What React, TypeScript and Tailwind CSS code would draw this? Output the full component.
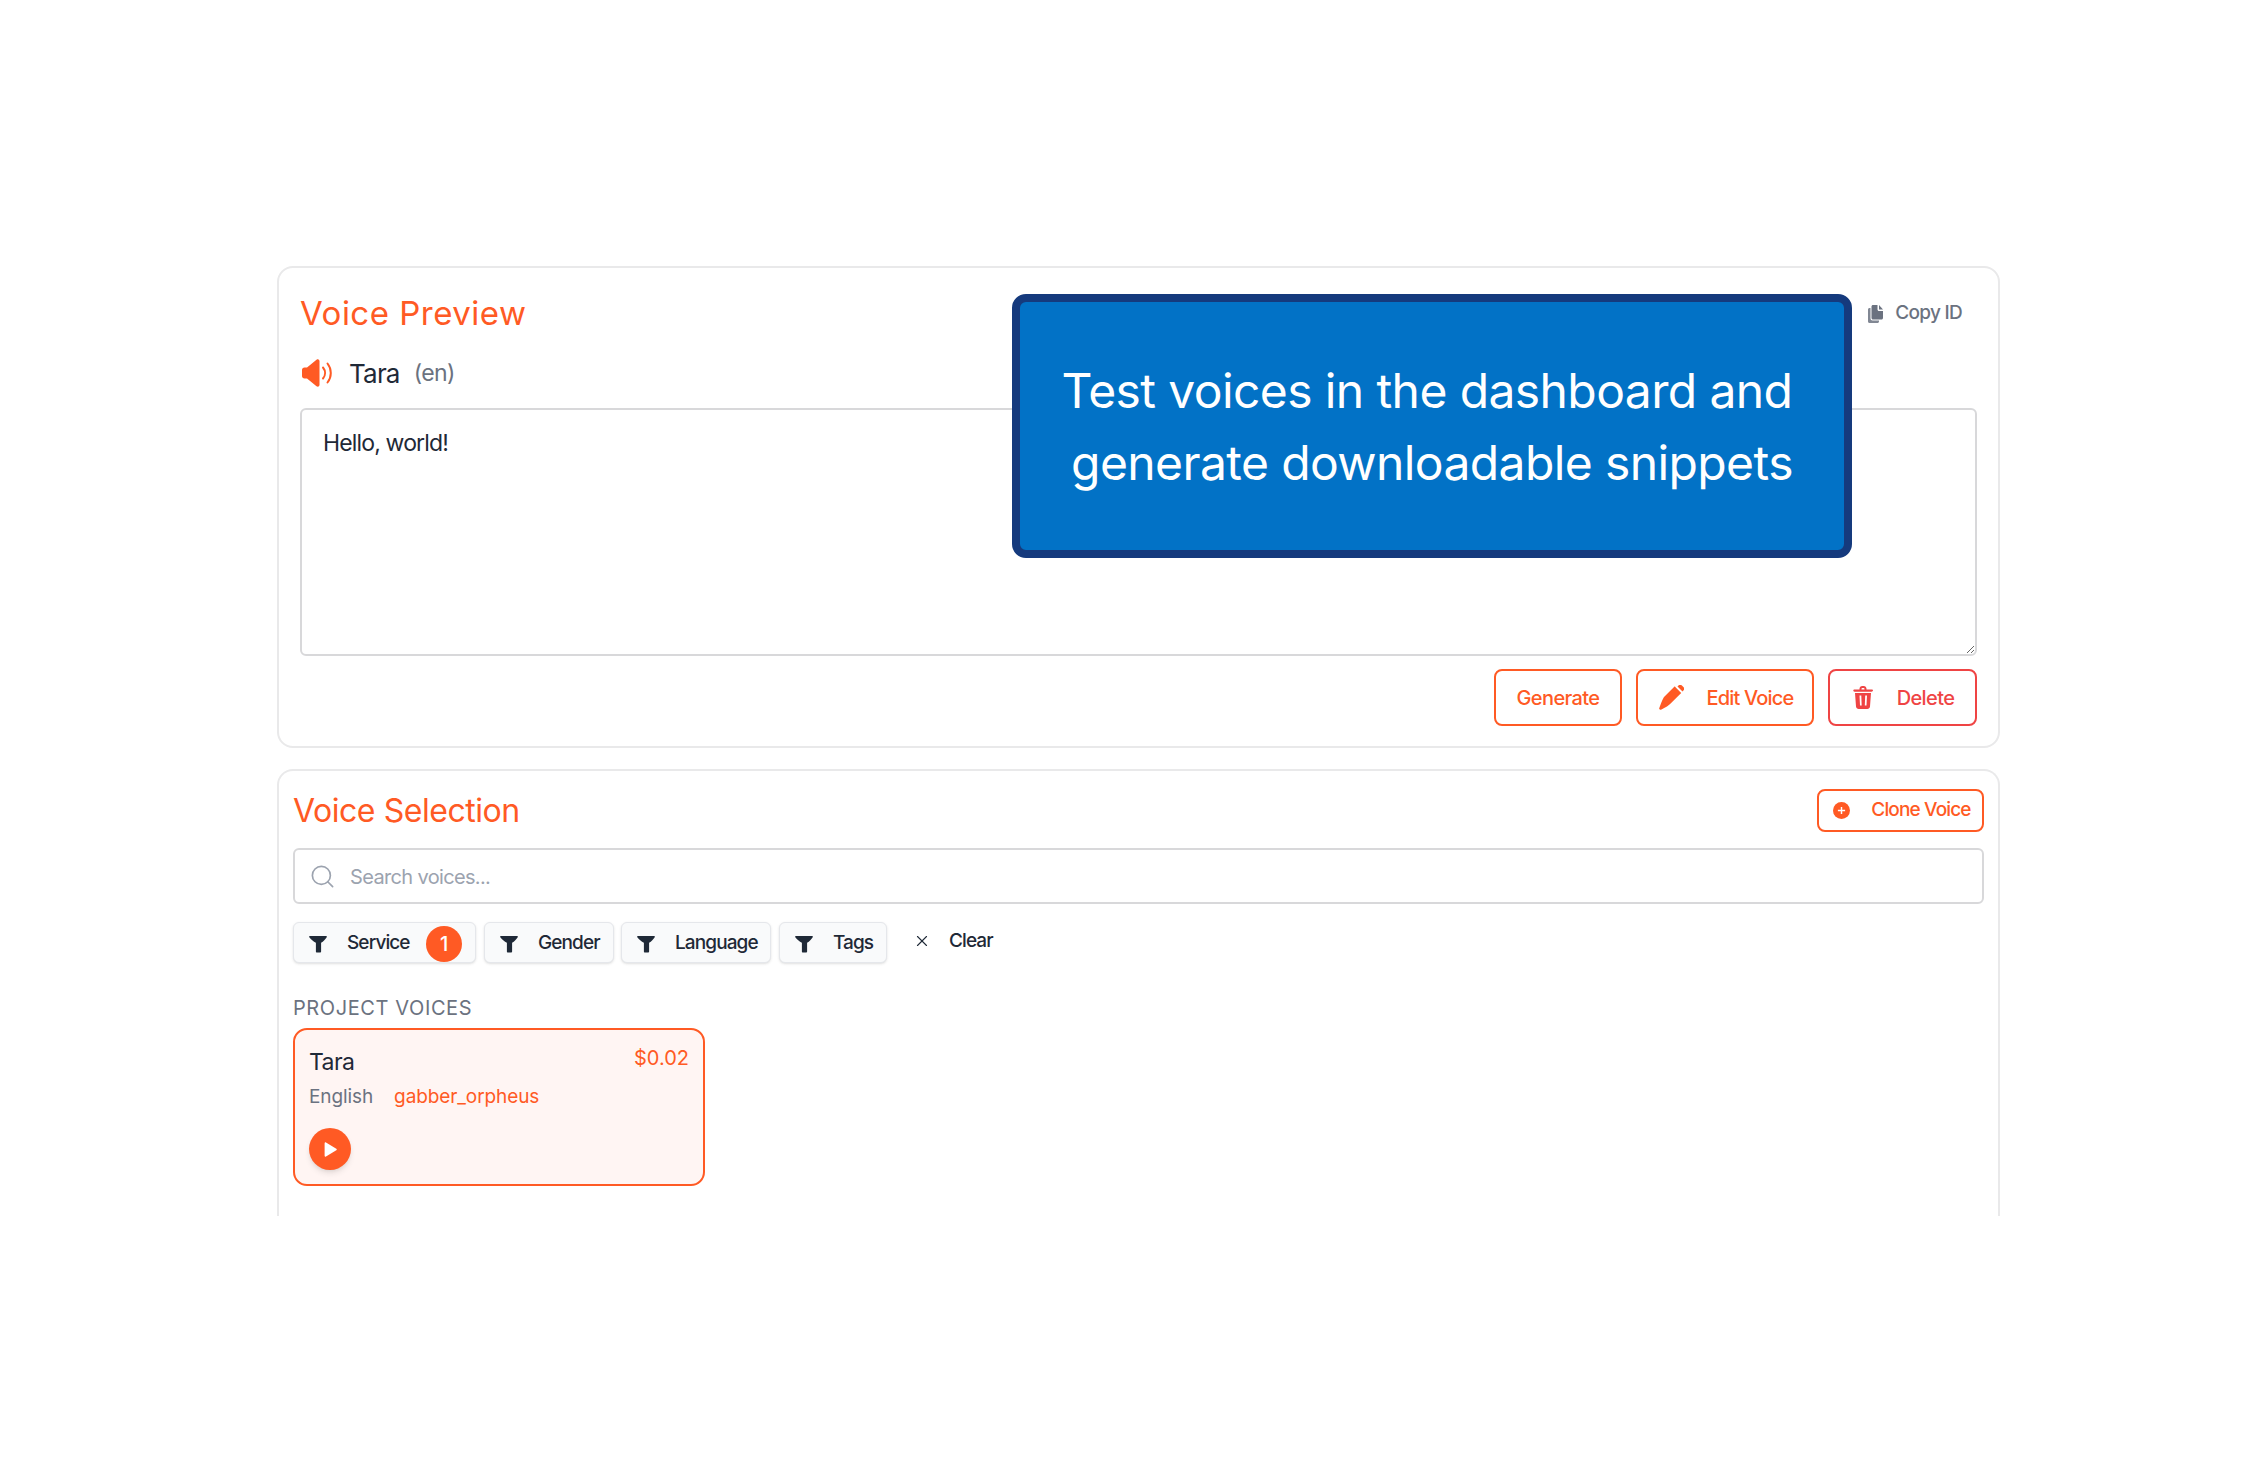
import { Search, X } from 'lucide-react';

const sans = "font-['Inter','Liberation_Sans',sans-serif]";

function FunnelIcon() {
  return (
    <svg viewBox="0 0 18 18" className="w-[18px] h-[18px] shrink-0" fill="#1f2937">
      <path d="M.8 1h16.400c.6 0 .9.7.5 1.200-1.300 2-3.300 4.300-5.600 5.600v8.600c0 .7-.5 1.100-1.100 1.100H7.900c-.6 0-1-.5-1-1.100V7.800C4.600 6.500 1.600 4.200.3 2.200-.1 1.700.2 1 .8 1z" />
    </svg>
  );
}

function SpeakerIcon() {
  return (
    <svg viewBox="0 0 31 28" className="w-[31px] h-[28px] shrink-0" fill="#ff5a24">
      <path d="M0 11c0-1.500 1-2.500 2.500-2.500h2.500L14.500.7c1.300-1.100 3-.2 3 1.500v23.600c0 1.700-1.700 2.600-3 1.500L5 19.500H2.500C1 19.500 0 18.500 0 17z" />
      <path d="M21 8.500c2.700 3.300 2.700 7.700 0 11" fill="none" stroke="#ff5a24" strokeWidth="2" strokeLinecap="round" />
      <path d="M25.500 4.500c4.400 5.500 4.400 13.500 0 19" fill="none" stroke="#ff5a24" strokeWidth="2" strokeLinecap="round" />
    </svg>
  );
}

function PencilIcon() {
  return (
    <svg viewBox="0 0 25 25" className="w-[25px] h-[25px] shrink-0" fill="#ff5a24">
      <path d="M5.500 11.500 15.800 1.200l-.3-.1L17 2.800l5.200 5.200L11.900 18.300c-1.800 1.800-5.400 4.400-9.900 6.400-1.200.5-2.200-.5-1.700-1.700 1.900-4.500 3.400-9.700 5.200-11.500z" />
      <path d="M18.500 1.500 20 0c.8-.5 1.800-.4 2.600.3l2 2c.7.800.8 1.900.2 2.700l-1.300 1.400z" />
    </svg>
  );
}

function TrashIcon() {
  return (
    <svg viewBox="0 0 20 23" className="w-[20px] h-[23px] shrink-0" fill="#ef4444">
      <path fillRule="evenodd" d="M6.500 2.800C6.500 1.200 7.700 0 9.300 0h1.400c1.600 0 2.800 1.200 2.800 2.800V3.500h5.300c.7 0 1.200.5 1.200 1.100S19.200 5.700 18.500 5.700h-17C.8 5.700.3 5.200.3 4.600s.5-1.100 1.200-1.100h5zm2 .7h3v-.7c0-.5-.3-.8-.8-.8H9.300c-.5 0-.8.3-.8.8z" />
      <path fillRule="evenodd" d="M2 7h16l-1 13.500c-.1 1.400-1.300 2.500-2.700 2.500H5.700C4.300 23 3.100 21.900 3 20.500zm4.500 2.500.5 10h1.700l-.4-10zm5.700 0-.4 10h1.700l.5-10z" />
    </svg>
  );
}

function CopyIcon() {
  return (
    <svg viewBox="0 0 15 18" className="w-[15px] h-[18px] shrink-0" fill="#6b7280">
      <path d="M5 0h4.500v4.500c0 .8.7 1.500 1.500 1.500h4v7c0 .8-.7 1.500-1.500 1.500H5c-.8 0-1.500-.7-1.500-1.500V1.500C3.500.7 4.200 0 5 0z" />
      <path d="M11 0l4 4.500h-4z" />
      <path d="M0 4.500C0 3.700.7 3 1.500 3h1v10.500c0 1.100.9 2 2 2H11v1c0 .8-.7 1.500-1.500 1.500h-8C.7 18 0 17.300 0 16.500z" fillOpacity="0.85" />
    </svg>
  );
}

function OutlineButton({ children, danger, className }: { children: React.ReactNode; danger?: boolean; className: string }) {
  return (
    <button
      className={`rounded-[8px] border-2 bg-white flex items-center justify-center font-medium ${
        danger ? 'border-[#ef4444] text-[#ef4444]' : 'border-[#ff5a24] text-[#ff5a24]'
      } ${className}`}
    >
      {children}
    </button>
  );
}

function FilterChip({ label, badge, className }: { label: string; badge?: string; className: string }) {
  return (
    <button className={`h-[41px] rounded-[6px] border border-[#e5e7eb] bg-[#f9fafb] shadow-sm flex items-center pl-[15px] pt-[2px] text-[#1f2937] text-[19px] font-medium tracking-[-0.9px] ${className}`}>
      <FunnelIcon />
      <span className="ml-[20px]">{label}</span>
      {badge && (
        <span className="ml-[16px] w-[36px] h-[36px] rounded-full bg-[#ff5a24] text-white flex items-center justify-center text-[20px]">
          {badge}
        </span>
      )}
    </button>
  );
}

export default function App() {
  return (
    <div className={`relative w-[2268px] h-[1472px] bg-white pt-[266px] pl-[277px] ${sans}`}>
      {/* Voice preview panel */}
      <div className="w-[1723px] h-[482px] rounded-[16px] border-2 border-[#e9e9ea] px-[21px] pt-[20px]">
        <div className="flex items-center justify-between h-[50px]">
          <h2 className="text-[33px] leading-[50px] text-[#ff5a24] tracking-[0.5px]">Voice Preview</h2>
          <div className="flex items-center gap-[12px] pr-[15px] pt-[1px] text-[#6b7280] text-[19px] font-medium tracking-[-0.7px]">
            <CopyIcon />
            <span>Copy ID</span>
          </div>
        </div>
        <div className="flex items-center mt-[17px] h-[36px]">
          <span className="ml-[2px]"><SpeakerIcon /></span>
          <span className="ml-[16px] text-[26px] text-[#1f2937] tracking-[-0.8px]">Tara</span>
          <span className="ml-[14px] text-[23px] text-[#6b7280] tracking-[-0.6px]">(en)</span>
        </div>
        <textarea
          readOnly
          defaultValue="Hello, world!"
          className="block mt-[17px] w-full h-[248px] rounded-[6px] border-2 border-[#d8d8da] px-[21px] py-[17px] text-[23px] leading-[32px] text-[#1f2937] tracking-[-0.85px] resize-y outline-none"
        />
        <div className="flex justify-end gap-[14px] mt-[13px]">
          <OutlineButton className="h-[57px] w-[128px] text-[20px] tracking-[-0.6px]">Generate</OutlineButton>
          <OutlineButton className="h-[57px] w-[178px] gap-[22px] pl-[3px] text-[20px] tracking-[-0.8px]">
            <PencilIcon />
            <span>Edit Voice</span>
          </OutlineButton>
          <OutlineButton danger className="h-[57px] w-[149px] gap-[24px] pl-[2px] text-[20px] tracking-[-0.6px]">
            <TrashIcon />
            <span>Delete</span>
          </OutlineButton>
        </div>
      </div>

      {/* Voice selection panel, cut off by the crop */}
      <div className="mt-[21px] w-[1723px] h-[447px] rounded-t-[16px] border-2 border-b-0 border-[#e9e9ea] px-[14px] pt-[18px]">
        <div className="flex items-center justify-between h-[43px]">
          <h2 className="text-[32px] text-[#ff5a24] tracking-[-0.45px]">Voice Selection</h2>
          <OutlineButton className="h-[43px] w-[167px] gap-[21px] pl-[3px] text-[19px] tracking-[-0.85px]">
            <span className="w-[17px] h-[17px] rounded-full bg-[#ff5a24] text-white flex items-center justify-center">
              <svg viewBox="0 0 10 10" className="w-[9px] h-[9px]" stroke="#fff" strokeWidth="1.6"><path d="M5 1v8M1 5h8" /></svg>
            </span>
            <span>Clone Voice</span>
          </OutlineButton>
        </div>
        <div className="mt-[16px] h-[56px] rounded-[6px] border-2 border-[#d8d8da] flex items-center pl-[14px] pt-[1px]">
          <Search className="w-[27px] h-[27px] text-[#9ca3af]" strokeWidth={1.5} />
          <span className="ml-[14px] text-[20px] text-[#9ca3af] tracking-[-0.65px]">Search voices...</span>
        </div>
        <div className="flex items-start mt-[18px]">
          <FilterChip label="Service" badge="1" className="w-[183px]" />
          <FilterChip label="Gender" className="w-[130px] ml-[8px]" />
          <FilterChip label="Language" className="w-[150px] ml-[7px]" />
          <FilterChip label="Tags" className="w-[108px] ml-[8px]" />
          <div className="flex items-center ml-[26px] h-[36px] pt-[2px] text-[#1f2937] text-[19px] font-medium tracking-[-0.9px]">
            <X className="w-[18px] h-[18px]" strokeWidth={1.5} />
            <span className="ml-[18px]">Clear</span>
          </div>
        </div>
        <div className="mt-[31px] text-[20px] leading-[28px] text-[#6b7280] tracking-[0.6px]">PROJECT VOICES</div>
        <div className="mt-[6px] w-[412px] h-[158px] rounded-[14px] border-2 border-[#ff5a24] bg-[#fff5f3] px-[14px] pt-[15px]">
          <div className="flex justify-between">
            <span className="text-[23px] leading-[34px] text-[#1f2937] tracking-[-0.6px]">Tara</span>
            <span className="text-[20px] leading-[26px] text-[#ff5a24]">$0.02</span>
          </div>
          <div className="flex gap-[21px] mt-[3px] text-[19px] leading-[30px] tracking-[-0.1px]">
            <span className="text-[#6b7280]">English</span>
            <span className="text-[#ff5a24]">gabber_orpheus</span>
          </div>
          <button className="mt-[16px] w-[42px] h-[42px] rounded-full bg-[#ff5a24] shadow-md flex items-center justify-center">
            <svg viewBox="0 0 14 14" className="w-[15px] h-[15px]" fill="#fff"><path d="M1.500 1.200v11.600c0 .7.7 1.100 1.300.7l9.600-5.800c.6-.3.6-1.100 0-1.400L2.800.5C2.200.1 1.500.5 1.500 1.200z" /></svg>
          </button>
        </div>
      </div>

      {/* Caption overlay */}
      <div className="absolute left-[1012px] top-[294px] w-[840px] h-[264px] rounded-[14px] border-[8px] border-[#153a7d] bg-[#0272c6] flex items-center justify-center text-center text-white text-[48px] leading-[72px] tracking-[-0.6px]">
        <p className="pt-[2px]">
          <span className="pr-[10px]">Test voices in the dashboard and</span>
          <br />
          generate downloadable snippets
        </p>
      </div>
    </div>
  );
}
